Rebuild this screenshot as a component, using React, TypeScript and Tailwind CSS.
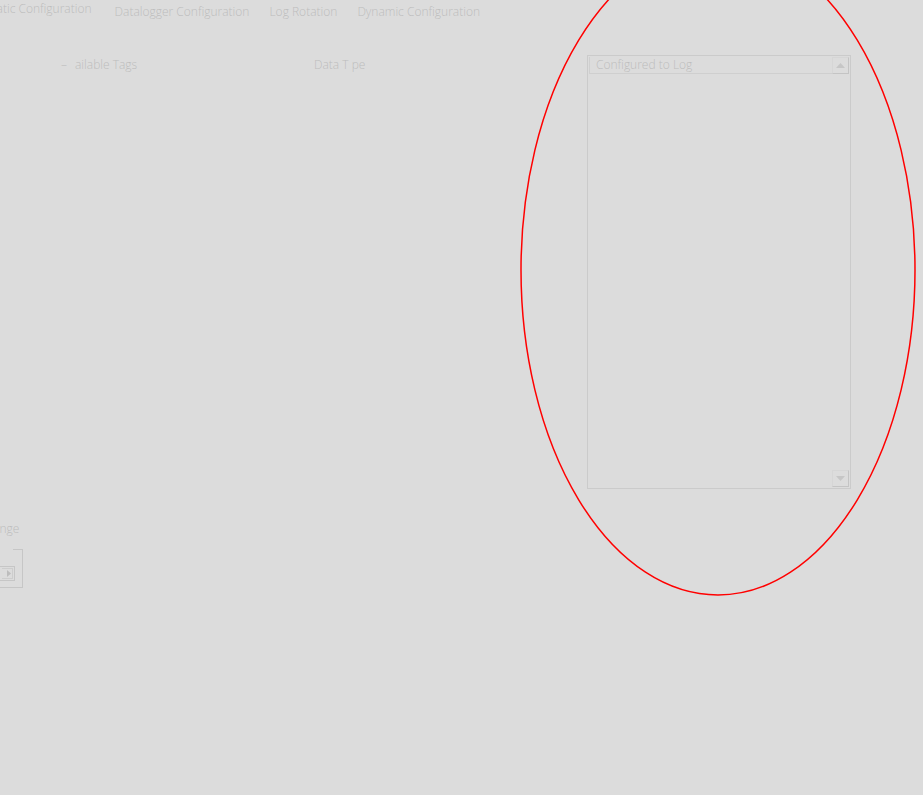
function ScrollArrow({ dir }: { dir: "up" | "down" }) {
  return (
    <div className="flex h-[17px] w-[17px] items-center justify-center border border-t-[#d6d6d6] border-l-[#d6d6d6] border-r-[#c4c4c4] border-b-[#c4c4c4] bg-[#dcdcdc]">
      <svg width="9" height="5" viewBox="0 0 9 5">
        {dir === "up" ? (
          <polygon points="4.5,0 9,5 0,5" fill="#c6c6c6" />
        ) : (
          <polygon points="0,0 9,0 4.5,5" fill="#c6c6c6" />
        )}
      </svg>
    </div>
  );
}

function App() {
  const tabs = ["Datalogger Configuration", "Log Rotation", "Dynamic Configuration"];

  return (
    <main
      className="relative h-[795px] w-full overflow-hidden bg-[#dcdcdc] text-[12px] font-light text-[#bdbdbd]"
      style={{ fontFamily: '"Open Sans", "Noto Sans", sans-serif' }}
    >
      {/* tab strip */}
      <header className="flex h-[22px] items-start">
        <span className="ml-[-14px] leading-[17px]">Static Configuration</span>
        <div className="ml-[23px] mt-[3px] flex gap-[20px] leading-[17px]">
          {tabs.map((t) => (
            <span key={t}>{t}</span>
          ))}
        </div>
      </header>

      <section className="flex">
        {/* left side */}
        <div className="flex w-[587px] flex-col">
          <div className="mt-[35px] flex leading-[16px]">
            <div className="ml-[61px] flex w-[253px] gap-[8px]">
              <span>–</span>
              <span>ailable Tags</span>
            </div>
            <span>Data T pe</span>
          </div>

          <div className="mt-[448px] flex flex-col">
            <span className="ml-[-14px] leading-[16px]">Range</span>
            <div className="mt-[12px] flex">
              <div className="relative h-[39px] w-[23px] border-b border-r border-[#c6c6c6]">
                <div className="absolute right-0 top-0 h-px w-[9px] bg-[#c6c6c6]" />
                <div className="mt-[17px] flex h-[15px] w-[15px] items-center justify-end border border-l-0 border-[#c6c6c6] pr-[1px]">
                  <div className="flex h-[11px] w-[11px] items-center justify-end border border-l-0 border-[#cdcdcd] pr-[1px]">
                    <svg width="4" height="7" viewBox="0 0 4 7">
                      <polygon points="0,0 4,3.5 0,7" fill="#bdbdbd" />
                    </svg>
                  </div>
                </div>
              </div>
            </div>
          </div>
        </div>

        {/* configured list */}
        <div className="mt-[33px] flex h-[434px] w-[264px] flex-col border border-[#cbcbcb] p-px">
          <div className="flex h-[17px] items-stretch">
            <div className="flex-1 border-b border-l border-[#cfcfcf] pl-[6px] leading-[16px]">
              Configured to Log
            </div>
            <ScrollArrow dir="up" />
          </div>
          <div className="flex-1" />
          <div className="flex justify-end">
            <ScrollArrow dir="down" />
          </div>
        </div>
      </section>

      {/* red annotation ellipse */}
      <svg className="pointer-events-none absolute left-0 top-0" width="923" height="795">
        <ellipse cx="718" cy="270" rx="197" ry="325" fill="none" stroke="#ff0000" strokeWidth="1.5" />
      </svg>
    </main>
  );
}

export default App;
